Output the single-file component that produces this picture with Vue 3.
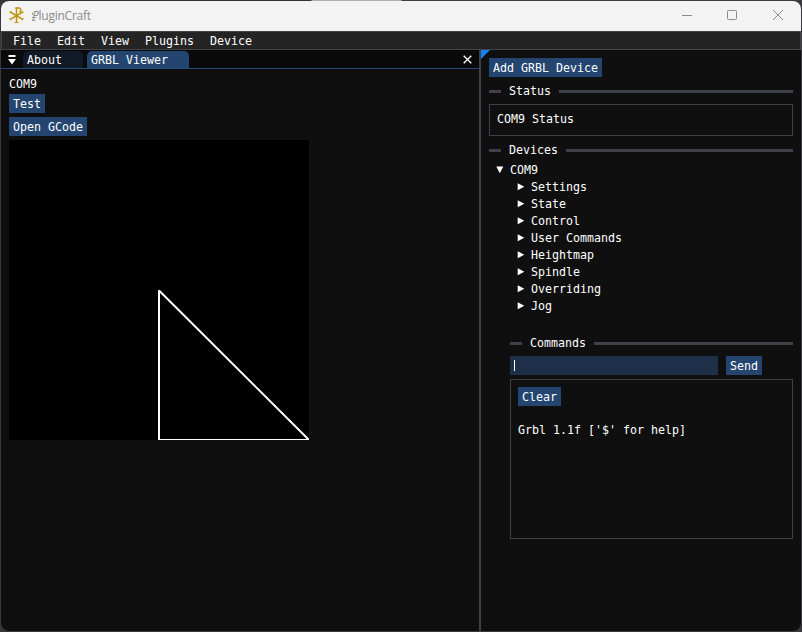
<script setup>
import { ref } from 'vue'

const menus = ['File', 'Edit', 'View', 'Plugins', 'Device']
const nodes = ['Settings', 'State', 'Control', 'User Commands', 'Heightmap', 'Spindle', 'Overriding', 'Jog']
const command = ref('')
</script>

<template>
  <div class="desktop">
    <div class="window">
      <header class="titlebar">
        <svg class="logo" width="16" height="16" viewBox="0 0 16 16" fill="none" stroke="#bf930b">
          <path d="M7.5 15.5V1H10.5L11.7 2.2V4L10.5 5.2" stroke-width="1.5" />
          <path d="M1.3 5L13.7 12.4M13.7 5L1.3 12.4" stroke-width="1.5" />
          <path d="M5.5 15.5H9.5M0.5 6L2 3.8M13 3.8L14.5 6M0.5 11.2L2 13.4M13 13.4L14.5 11.2M6 1H8" stroke-width="1" />
        </svg>
        <span class="title"><span class="rho">P<svg class="rho-mark" width="8" height="10" viewBox="0 0 8 10" fill="none" stroke="#a0a0a0"><path d="M1 6.5H5.5M1 9.5H4.5M1.5 1.5V4" /></svg></span>luginCraft</span>
        <svg class="controls" width="104" height="12" viewBox="0 0 104 12" fill="none" stroke="#8b8b8b">
          <path d="M0 6.5H10" />
          <rect x="45.5" y="1.5" width="9" height="9" rx="1" />
          <path d="M91 1L101 11M101 1L91 11" />
        </svg>
      </header>

      <nav class="menubar">
        <span v-for="m in menus" :key="m">{{ m }}</span>
      </nav>

      <main class="dock">
        <section class="left">
          <div class="tabs">
            <svg class="tablist" width="8" height="10" viewBox="0 0 8 10" fill="#fff"><path d="M0.5 0H7.5V2H0.5ZM0 4H8L4 9.5Z" /></svg>
            <div class="tab about">About</div>
            <div class="tab active">GRBL Viewer</div>
            <svg class="close" width="9" height="9" viewBox="0 0 9 9" stroke="#fff" stroke-width="1.3"><path d="M0.7 0.7L8.3 8.3M8.3 0.7L0.7 8.3" /></svg>
          </div>
          <div class="viewer">
            <div class="label">COM9</div>
            <button>Test</button>
            <button>Open GCode</button>
            <svg class="canvas" width="300" height="300" viewBox="0 0 300 300" fill="none" stroke="#fff" stroke-width="2" stroke-linejoin="bevel">
              <path d="M150 150.5V300H300Z" />
            </svg>
          </div>
        </section>

        <aside class="right">
          <svg class="corner" width="9" height="9" viewBox="0 0 9 9"><path d="M0 0H9L0 9Z" fill="#1482fa" /></svg>
          <button>Add GRBL Device</button>
          <div class="sep first">Status</div>
          <div class="status">COM9 Status</div>
          <div class="sep second">Devices</div>
          <div class="tree">
            <div class="row root">
              <svg width="8" height="8" viewBox="0 0 8 8" fill="#fff"><path d="M0.3 0.5H7.3L3.8 7.3Z" /></svg>COM9
            </div>
            <div v-for="n in nodes" :key="n" class="row">
              <svg width="8" height="8" viewBox="0 0 8 8" fill="#fff"><path d="M0.7 0.3V7.3L7.3 3.8Z" /></svg>{{ n }}
            </div>
          </div>
          <div class="commands">
            <div class="sep">Commands</div>
            <div class="entry">
              <div class="input"><i class="caret"></i>{{ command }}</div>
              <button>Send</button>
            </div>
            <div class="console">
              <button>Clear</button>
              <div class="output">Grbl 1.1f ['$' for help]</div>
            </div>
          </div>
        </aside>
      </main>
    </div>
  </div>
</template>

<style>
body { margin: 0; background: #000; }
</style>

<style scoped>
* { box-sizing: border-box; }
.desktop {
  width: 802px;
  height: 632px;
  padding: 1px;
  background: linear-gradient(90deg, #353135 0 311px, #b0aeae 312px 401px, #403b3e 402px) top / 100% 1px no-repeat, #39383b;
  overflow: hidden;
}
.window {
  width: 800px;
  height: 630px;
  display: flex;
  flex-direction: column;
  border-radius: 8px;
  overflow: hidden;
  background: #0f0f0f;
  color: #fff;
  font: 11.63px/13px "DejaVu Sans Mono", monospace;
  white-space: pre;
}
.titlebar {
  flex: none;
  height: 30px;
  display: flex;
  align-items: center;
  padding-left: 8px;
  background: #f3f3f3;
}
.logo { margin-top: -2px; }
.title {
  margin: 0 0 0 7px;
  font: 12px/16px "Open Sans", "Noto Sans", sans-serif;
  letter-spacing: -0.25px;
  color: #8c8c8c;
}
.rho { position: relative; font-style: italic; }
.rho-mark { position: absolute; left: -1px; top: 4px; }
.controls { margin-left: auto; margin-right: 15px; margin-top: -2px; }
.menubar {
  flex: none;
  height: 19px;
  display: flex;
  align-items: center;
  gap: 16px;
  padding: 2px 0 0 11px;
  border: 1px solid #434349;
  background: #242424;
}
.dock { flex: 1; display: flex; min-height: 0; }
.left { width: 480px; border-right: 2px solid #3f3f48; }
.tabs {
  height: 19px;
  display: flex;
  align-items: flex-end;
  padding-left: 7px;
  border-bottom: 1px solid #24477a;
  background: #0a0a0a;
}
.tablist { margin: 0 7px 3px 0; }
.tab { height: 17px; padding: 3px 4px 1px; border-radius: 5px 5px 0 0; }
.about { width: 60px; margin-right: 4px; background: #111a26; }
.active { width: 102px; background: #23456f; }
.close { margin: 0 7px 4px auto; }
.viewer { padding: 9px 8px; display: flex; flex-direction: column; align-items: flex-start; }
.label { margin-bottom: 3px; }
button {
  display: block;
  flex: none;
  height: 19px;
  padding: 4px 4px 2px;
  border: 0;
  background: #23456f;
  color: #fff;
  font: inherit;
}
.viewer button { margin-bottom: 4px; }
.canvas { display: block; background: #000; }
.right { position: relative; flex: 1; padding: 8px; }
.corner { position: absolute; left: 0; top: 0; }
.sep { display: flex; align-items: center; gap: 8px; height: 13px; }
.sep::before, .sep::after { content: ""; height: 3px; background: #40404a; }
.sep::before { width: 12px; }
.sep::after { flex: 1; }
.first { margin-top: 8px; }
.status {
  height: 32px;
  margin-top: 6px;
  padding: 8px 7px;
  border: 1px solid #40404a;
}
.second { margin-top: 8px; }
.tree { margin-top: 5px; }
.row { display: flex; align-items: center; height: 17px; padding-left: 28px; }
.row svg { margin: -2px 6px 0 0; }
.row.root { padding-left: 7px; }
.commands { margin: 22px 0 0 21px; }
.entry { display: flex; gap: 8px; margin-top: 6px; }
.input { width: 208px; height: 19px; padding: 4px; background: #1e2f49; display: flex; }
.caret { width: 1px; height: 11px; background: #fff; }
.console { height: 160px; margin-top: 4px; padding: 7px; border: 1px solid #40404a; }
.output { margin-top: 18px; }
</style>
